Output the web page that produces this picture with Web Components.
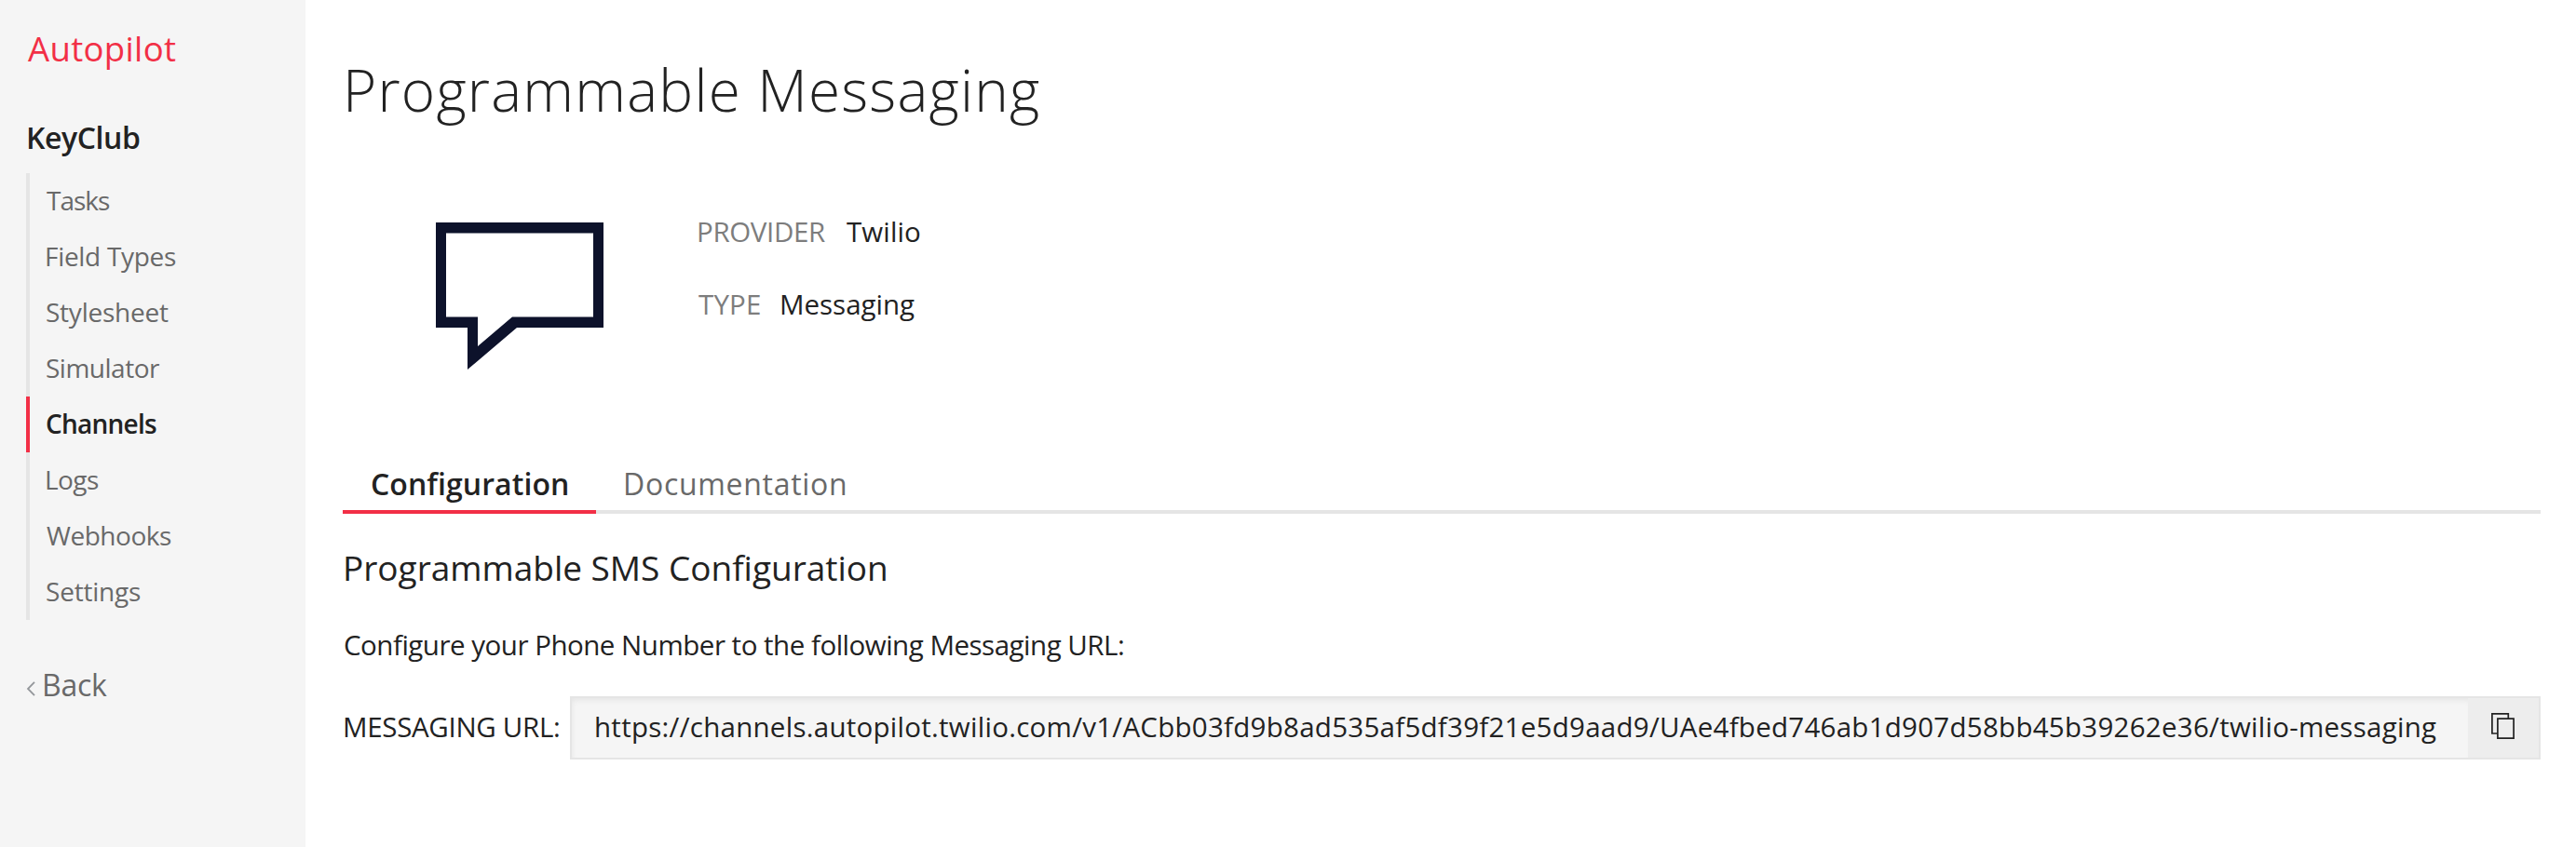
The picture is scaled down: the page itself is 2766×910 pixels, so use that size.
<!DOCTYPE html>
<html lang="en"><head><meta charset="utf-8"><title>Autopilot – Programmable Messaging</title>
<style>
body{margin:0;background:#fff;font-family:"Open Sans","Noto Sans",sans-serif;color:#222}
</style></head><body>
<ap-shell></ap-shell>
<script>
const define=(name,html,init)=>{
  const t=document.createElement('template');t.innerHTML=html;
  customElements.define(name,class extends HTMLElement{
    connectedCallback(){
      if(this.shadowRoot)return;
      this.attachShadow({mode:'open'}).append(t.content.cloneNode(true));
      if(init)init.call(this,this.shadowRoot);
    }
  });
};
const ctx=document.createElement('canvas').getContext('2d');
// One line of text, tracked so that its ink spans exactly the "span" attribute.
define('ap-text',`<style>
:host{display:block;white-space:nowrap;font-variant-ligatures:none}
span{display:inline-block}
</style><span><slot></slot></span>`,function(root){
  const s=root.querySelector('span'),text=this.textContent,cs=getComputedStyle(this);
  ctx.font=`${cs.fontWeight} ${cs.fontSize} ${cs.fontFamily}`;
  const a=ctx.measureText(text[0]),z=ctx.measureText(text.at(-1));
  const lsb=-a.actualBoundingBoxLeft,rsb=z.width-z.actualBoundingBoxRight;
  const span=+this.getAttribute('span');
  const ls=(span+lsb+rsb-s.getBoundingClientRect().width)/(text.length-1);
  s.style.letterSpacing=ls+'px';
  s.style.marginLeft=-lsb+'px';
  this.style.width=span+'px';
});
define('ap-nav-item',`<style>
:host{display:block;box-sizing:border-box;height:60px;border-left:4px solid #e5e5e5;padding-left:18px;
font-size:28px;line-height:58px;color:#696969}
:host([active]){border-color:#f22f46;color:#222;font-weight:560}
</style><slot></slot>`);
define('ap-sidebar',`<style>
:host{display:block;box-sizing:border-box;width:328px;background:#f5f5f5;padding:32px 28px 0}
.brand{font-size:36.5px;line-height:40px;color:#f22f46;margin-left:2px}
.bot{font-size:32px;line-height:40px;font-weight:560;margin:56px 0 18px 3px}
.back{display:flex;align-items:center;margin-top:50px;font-size:32px;line-height:40px;color:#696969}
svg{width:10px;height:18px;margin:7px 10px 0 0}
</style>
<ap-text class="brand" span="159">Autopilot</ap-text>
<ap-text class="bot" span="119">KeyClub</ap-text>
<nav>
<ap-nav-item><ap-text span="68">Tasks</ap-text></ap-nav-item>
<ap-nav-item><ap-text span="139">Field Types</ap-text></ap-nav-item>
<ap-nav-item><ap-text span="131">Stylesheet</ap-text></ap-nav-item>
<ap-nav-item><ap-text span="122">Simulator</ap-text></ap-nav-item>
<ap-nav-item active><ap-text span="118">Channels</ap-text></ap-nav-item>
<ap-nav-item><ap-text span="56">Logs</ap-text></ap-nav-item>
<ap-nav-item><ap-text span="134">Webhooks</ap-text></ap-nav-item>
<ap-nav-item><ap-text span="101">Settings</ap-text></ap-nav-item>
</nav>
<div class="back"><svg viewBox="0 0 10 18" fill="none" stroke="#94979b" stroke-width="1.8"><path d="M9 1.8 2 9l7 7.2"/></svg><ap-text span="67">Back</ap-text></div>`);
define('ap-field',`<style>
:host{display:flex;font-size:29.5px;line-height:40px}
.k{color:#7d7d7d}
</style><div class="k"><slot name="label"></slot></div><slot></slot>`);
define('ap-summary',`<style>
:host{display:flex;align-items:flex-start}
svg{display:block;width:180px;height:158px;margin:10px 102px 0 100px}
.fields{display:grid;row-gap:38px}
ap-field{column-gap:23px}
</style>
<svg viewBox="0 0 180 158"><path fill="#0d122b" fill-rule="evenodd" d="M0 0H180V113H87L34 158V113H0ZM11 11.5V101.5H45V133L82 101.5H169V11.5Z"/></svg>
<div class="fields">
<ap-field><ap-text slot="label" span="136">PROVIDER</ap-text><ap-text span="79">Twilio</ap-text></ap-field>
<ap-field><ap-text slot="label" span="66">TYPE</ap-text><ap-text span="143">Messaging</ap-text></ap-field>
</div>`);
define('ap-tabs',`<style>
:host{display:flex;box-sizing:border-box;height:60px;box-shadow:inset 0 -4px #e5e5e5;font-size:32px;line-height:40px}
div{box-sizing:border-box;padding:8px 31px 0 32px;color:#696969}
.on{width:272px;padding-left:31px;color:#222;font-weight:560;border-bottom:4px solid #f22f46}
</style><div class="on"><ap-text span="210">Configuration</ap-text></div><div><ap-text span="236">Documentation</ap-text></div>`);
define('ap-copy-field',`<style>
:host{display:flex;box-sizing:border-box;height:68px;border:2px solid #e5e5e5;background:#f5f5f5}
.value{flex:1;padding:11px 0 0 26px;line-height:40px;box-shadow:inset 2px 4px 6px -2px rgba(0,0,0,.07)}
button{all:unset;box-sizing:border-box;display:flex;align-items:flex-start;width:76px;background:#ededed;padding:16px 0 0 25px}
svg{display:block;width:25px;height:28px}
</style><div class="value"><slot></slot></div>
<button aria-label="Copy"><svg viewBox="0 0 25 28" fill="none" stroke="#222" stroke-width="1.7"><path d="M6.5 22H.9V.9H18.3V5.8M6.9 6.2H24.1V27.1H6.9Z"/></svg></button>`);
define('ap-main',`<style>
:host{display:block;padding:56px 38px 0 40px;flex:1}
.title{font-size:62px;line-height:80px;font-weight:330;margin-left:6px}
ap-summary{height:263px;margin-top:93px}
.sub{font-size:37px;line-height:48px;margin:34px 0 0 3px}
.text{font-size:29.5px;line-height:40px;margin:39px 0 35px 2px}
.row{display:flex;font-size:29.5px;line-height:40px}
.row>ap-text{margin:13px 12px 0 2px}
ap-copy-field{flex:1}
</style>
<ap-text class="title" span="742">Programmable Messaging</ap-text>
<ap-summary></ap-summary>
<ap-tabs></ap-tabs>
<ap-text class="sub" span="580">Programmable SMS Configuration</ap-text>
<ap-text class="text" span="836">Configure your Phone Number to the following Messaging URL:</ap-text>
<div class="row"><ap-text span="230">MESSAGING URL:</ap-text>
<ap-copy-field><ap-text span="1976">https://channels.autopilot.twilio.com/v1/ACbb03fd9b8ad535af5df39f21e5d9aad9/UAe4fbed746ab1d907d58bb45b39262e36/twilio-messaging</ap-text></ap-copy-field></div>`);
define('ap-shell',`<style>:host{display:flex;height:910px;overflow:hidden}</style><ap-sidebar></ap-sidebar><ap-main></ap-main>`);
</script></body></html>
